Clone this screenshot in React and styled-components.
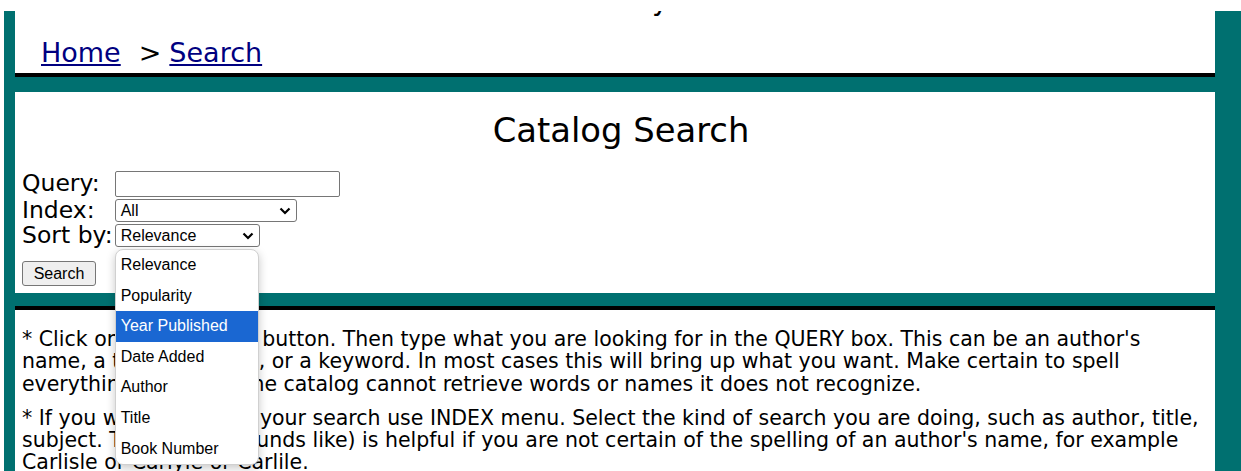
import React from "react";
import styled, { createGlobalStyle } from "styled-components";

const TEAL = "#007070";
const NAVY = "#000080";
const UI_FONT = `"Liberation Sans", Arial, sans-serif`;

const GlobalStyle = createGlobalStyle`
  html, body {
    margin: 0;
    padding: 0;
    background: #fff;
  }
  body {
    font-family: "DejaVu Sans", Verdana, Tahoma, sans-serif;
    color: #000;
    overflow: hidden;
  }
`;

const Frame = styled.div`
  margin: 11px 0 0 4px;
  padding: 0 26px 0 11px;
  background: ${TEAL};
  min-height: 520px;
`;

/* ---------- header with breadcrumbs ---------- */

const HeaderPanel = styled.header`
  background: #fff;
  height: 62px;
  border-bottom: 4px solid #000;
`;

/* only the descender of the site title, scrolled above, still shows */
const TitleTail = styled.div`
  display: flex;
  align-items: flex-end;
  height: 7px;
  overflow: hidden;
  padding-left: 637px;
  font-size: 28px;
`;

const TailGlyph = styled.span`
  line-height: 28px;
  margin-bottom: 2.7px;
`;

const Crumbs = styled.nav`
  padding: 20px 0 0 26px;
  font-size: 27px;
  line-height: 30px;
`;

const CrumbLink = styled.a`
  color: ${NAVY};
  text-decoration: underline;
`;

const CrumbSep = styled.span`
  display: inline-block;
  margin: 0 8px 0 18px;
`;

/* ---------- search form ---------- */

const SearchPanel = styled.section`
  position: relative;
  z-index: 2;
  margin-top: 15px;
  background: #fff;
  padding: 0 7px 7px;
`;

const Title = styled.h1`
  margin: 0;
  padding: 19px 0 0 12px;
  font-size: 33.8px;
  font-weight: normal;
  line-height: 40px;
  text-align: center;
`;

const Fields = styled.div`
  display: grid;
  grid-template-columns: max-content max-content;
  column-gap: 2px;
  align-items: start;
  justify-content: start;
  margin-top: 19px;
`;

const Label = styled.label`
  font-size: 23.5px;
  line-height: 24px;
  margin-top: ${(p) => p.$top || 0}px;
`;

const TextInput = styled.input`
  box-sizing: border-box;
  width: 225px;
  height: 26px;
  margin: 1px 0;
  border: 1px solid #767676;
  border-radius: 2px;
  font: 16px ${UI_FONT};
  padding: 1px 4px;
  outline: none;
`;

const SelectWrap = styled.div`
  position: relative;
  margin: 1px 0;
`;

const SelectBox = styled.div`
  box-sizing: border-box;
  width: ${(p) => p.$w}px;
  height: 23px;
  border: 1px solid #767676;
  border-radius: 3px;
  background: #fff;
  display: flex;
  align-items: center;
  justify-content: space-between;
  padding: 0 5px 0 5px;
  font: 16px ${UI_FONT};
  color: #000;
`;

const Chevron = () => (
  <svg width="12" height="8" viewBox="0 0 12 8" aria-hidden="true">
    <path d="M1.5 1.5 L6 6 L10.5 1.5" fill="none" stroke="#000" strokeWidth="2.2" />
  </svg>
);

const Menu = styled.ul`
  position: absolute;
  top: calc(100% + 2px);
  left: 0;
  box-sizing: border-box;
  width: 144px;
  margin: 0;
  padding: 0;
  list-style: none;
  background: #fff;
  border: 1px solid #d0d0d0;
  border-radius: 8px;
  box-shadow: 0 3px 10px rgba(0, 0, 0, 0.22);
  overflow: hidden;
  z-index: 5;
`;

const MenuItem = styled.li`
  height: 30.6px;
  padding-left: 5px;
  font: 16px/30.6px ${UI_FONT};
  color: ${(p) => (p.$active ? "#fff" : "#000")};
  background: ${(p) => (p.$active ? "#1a67d2" : "transparent")};
  white-space: nowrap;
`;

const Button = styled.button`
  box-sizing: border-box;
  display: block;
  width: 74px;
  height: 25px;
  margin-top: 13px;
  padding: 0;
  border: 1px solid #767676;
  border-radius: 3px;
  background: #efefef;
  font: 16px ${UI_FONT};
  color: #000;
`;

/* ---------- help text ---------- */

const InfoPanel = styled.section`
  margin-top: 13px;
  border-top: 4px solid #000;
  background: #fff;
  padding: 18px 7px 0 7px;
  min-height: 300px;
`;

const Para = styled.p`
  margin: 0;
  font-size: 20.5px;
  line-height: 22.3px;
  & + & {
    margin-top: 12px;
  }
`;

const sortOptions = [
  "Relevance",
  "Popularity",
  "Year Published",
  "Date Added",
  "Author",
  "Title",
  "Book Number",
];

export default function App() {
  return (
    <>
      <GlobalStyle />
      <Frame>
        <HeaderPanel>
          <TitleTail>
            <TailGlyph>y</TailGlyph>
          </TitleTail>
          <Crumbs>
            <CrumbLink href="#">Home</CrumbLink>
            <CrumbSep>&gt;</CrumbSep>
            <CrumbLink href="#">Search</CrumbLink>
          </Crumbs>
        </HeaderPanel>

        <SearchPanel>
          <Title>Catalog Search</Title>
          <Fields>
            <Label $top={1}>Query:</Label>
            <TextInput type="text" />
            <Label>Index:</Label>
            <SelectWrap>
              <SelectBox $w={182}>
                <span>All</span>
                <Chevron />
              </SelectBox>
            </SelectWrap>
            <Label>Sort by:</Label>
            <SelectWrap>
              <SelectBox $w={145}>
                <span>Relevance</span>
                <Chevron />
              </SelectBox>
              <Menu role="listbox">
                {sortOptions.map((o) => (
                  <MenuItem key={o} $active={o === "Year Published"}>
                    {o}
                  </MenuItem>
                ))}
              </Menu>
            </SelectWrap>
          </Fields>
          <Button type="button">Search</Button>
        </SearchPanel>

        <InfoPanel>
          <Para>
            * Click on the "Search" button. Then type what you are looking for in the
            QUERY box. This can be an author's name, a title, a subject, or a
            keyword. In most cases this will bring up what you want. Make certain to
            spell everything correctly. The catalog cannot retrieve words or names it
            does not recognize.
          </Para>
          <Para>
            * If you wish to narrow your search use INDEX menu. Select the kind of
            search you are doing, such as author, title, subject. The Sound (sounds
            like) is helpful if you are not certain of the spelling of an author's
            name, for example Carlisle or Carlyle or Carlile.
          </Para>
        </InfoPanel>
      </Frame>
    </>
  );
}
